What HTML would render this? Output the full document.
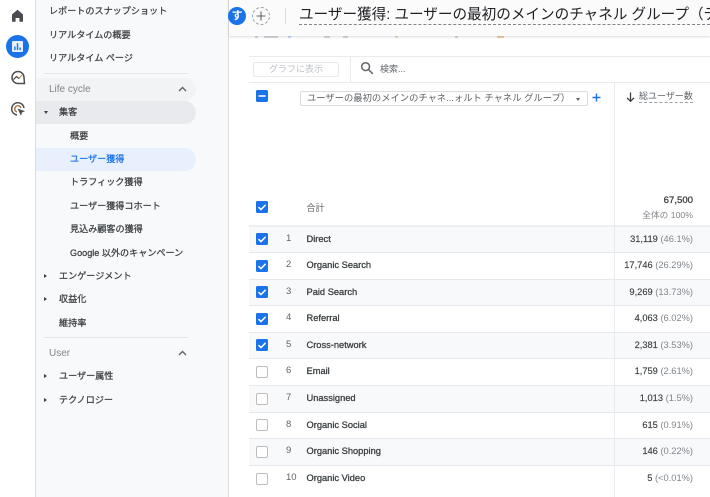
<!DOCTYPE html>
<html lang="ja"><head><meta charset="utf-8">
<style>
html,body{margin:0;padding:0}
body{width:710px;height:497px;position:relative;overflow:hidden;background:#fff;font-family:"Liberation Sans","Noto Sans CJK JP",sans-serif;color:#3c4043;font-size:10px}
.a{position:absolute;white-space:nowrap}
.nav{position:absolute;white-space:nowrap;font-size:9.1px;line-height:14px;color:#3c4043;font-weight:normal;-webkit-text-stroke:.25px #3c4043}
.sec{font-size:10px;color:#80868b;-webkit-text-stroke:0}
.tri{position:absolute;left:44px;width:0;height:0;border-top:2.5px solid transparent;border-bottom:2.5px solid transparent;border-left:3.5px solid #3c4043}
.row{position:absolute;left:249px;width:461px;box-sizing:border-box;border-bottom:1px solid #e6e8ee}
.g{background:#f8f9fb}
.cb{position:absolute;left:256px;width:12px;height:12px;box-sizing:border-box;border-radius:1.5px;background:#1a73e8}
.cb svg{position:absolute;left:0;top:0}
.ub{position:absolute;left:256px;width:12px;height:12px;box-sizing:border-box;border-radius:2px;border:1.5px solid #bdbdbd;background:#fff}
.n{position:absolute;left:286px;font-size:9.5px;color:#5f6368;line-height:14px}
.l{position:absolute;left:306.5px;font-size:9.3px;font-weight:normal;-webkit-text-stroke:.3px #3c4043;color:#3c4043;line-height:14px;white-space:nowrap}
.v{position:absolute;right:17px;font-size:9.3px;line-height:14px;color:#3c4043;white-space:nowrap;-webkit-text-stroke:.15px #3c4043}
.v span{color:#80868b;-webkit-text-stroke:0}
.bit{position:absolute;top:36px;height:2px;background:#d5d7da}
</style></head><body>

<!-- side rail -->
<div class="a" style="left:0;top:0;width:35px;height:497px;background:#fff;border-right:1px solid #dadce0"></div>
<svg class="a" style="left:11px;top:9px" width="13" height="13" viewBox="0 0 13 13"><path d="M6.5 .8 1 5.4V12.8h3.6V9h3.8v3.8H12V5.4z" fill="#4a4d52"/></svg>
<div class="a" style="left:6px;top:35px;width:23px;height:23px;border-radius:50%;background:#1a73e8"></div>
<svg class="a" style="left:12px;top:41px" width="11" height="11" viewBox="0 0 11 11"><rect width="11" height="11" rx="1" fill="#e8f0fe"/><rect x="2.2" y="5.5" width="1.4" height="3.6" fill="#1a73e8"/><rect x="4.8" y="2.2" width="1.4" height="6.9" fill="#1a73e8"/><rect x="7.4" y="6.5" width="1.4" height="2.6" fill="#1a73e8"/></svg>
<svg class="a" style="left:10px;top:70px" width="16" height="16" viewBox="0 0 16 16" fill="none" stroke="#4a4d52" stroke-width="1.5"><path d="M14.5 13.5H8A6 6 0 1 1 14 7.5z"/><path d="M3.5 9.5 6.5 6.5 9 8.5 12 5" stroke="#c78a4a" stroke-width="1.1"/><path d="M3.5 9.5 6.5 6.5 9 8.5" stroke-width="1.2"/></svg>
<svg class="a" style="left:10px;top:101px" width="16" height="16" viewBox="0 0 16 16" fill="none" stroke="#4a4d52" stroke-width="1.4"><path d="M7 14A6.2 6.2 0 1 1 14 7"/><path d="M7 11A3.2 3.2 0 1 1 11 7" stroke="#a5784f"/><path d="M7.5 7.5 15 10.3 12 11.5 11 14.8z" fill="#4a4d52" stroke="none"/></svg>

<!-- sidebar -->
<div class="a" style="left:36px;top:0;width:192px;height:497px;background:#f8f9fb;border-right:1px solid #dadce0"></div>
<div class="nav" style="left:49px;top:4px">レポートのスナップショット</div>
<div class="nav" style="left:49px;top:28px">リアルタイムの概要</div>
<div class="nav" style="left:49px;top:51px">リアルタイム ページ</div>
<div class="a" style="left:44px;top:73px;width:144px;height:1px;background:#e3e5e8"></div>
<div class="a" style="left:36px;top:78px;width:160px;height:23px;background:#f1f3f4;border-radius:0 12px 12px 0"></div>
<div class="nav sec" style="left:49px;top:83px">Life cycle</div>
<svg class="a" style="left:178px;top:85px" width="9" height="8" viewBox="0 0 9 8" fill="none" stroke="#5f6368" stroke-width="1.4"><path d="M1 6 4.5 2.5 8 6"/></svg>
<div class="a" style="left:36px;top:101px;width:160px;height:23px;background:#e8eaed;border-radius:0 12px 12px 0"></div>
<div class="a" style="left:43.5px;top:111px;width:0;height:0;border-left:2.5px solid transparent;border-right:2.5px solid transparent;border-top:3.5px solid #3c4043"></div>
<div class="nav" style="left:59px;top:105px">集客</div>
<div class="nav" style="left:70px;top:129px">概要</div>
<div class="a" style="left:36px;top:148px;width:160px;height:23px;background:#e8f0fe;border-radius:0 12px 12px 0"></div>
<div class="nav" style="left:70px;top:152px;color:#1a73e8;-webkit-text-stroke:.25px #1a73e8">ユーザー獲得</div>
<div class="nav" style="left:70px;top:175px">トラフィック獲得</div>
<div class="nav" style="left:70px;top:199px">ユーザー獲得コホート</div>
<div class="nav" style="left:70px;top:222px">見込み顧客の獲得</div>
<div class="nav" style="left:70px;top:246px">Google 以外のキャンペーン</div>
<div class="tri" style="top:273.5px"></div>
<div class="nav" style="left:59px;top:269px">エンゲージメント</div>
<div class="tri" style="top:296.5px"></div>
<div class="nav" style="left:59px;top:292px">収益化</div>
<div class="nav" style="left:59px;top:316px">維持率</div>
<div class="a" style="left:44px;top:337px;width:144px;height:1px;background:#e3e5e8"></div>
<div class="nav sec" style="left:49px;top:347px">User</div>
<svg class="a" style="left:178px;top:349px" width="9" height="8" viewBox="0 0 9 8" fill="none" stroke="#5f6368" stroke-width="1.4"><path d="M1 6 4.5 2.5 8 6"/></svg>
<div class="tri" style="top:374px"></div>
<div class="nav" style="left:59px;top:369px">ユーザー属性</div>
<div class="tri" style="top:397.5px"></div>
<div class="nav" style="left:59px;top:393px">テクノロジー</div>

<!-- main background strip -->
<div class="a" style="left:229px;top:36px;width:481px;height:461px;background:#fff"></div>

<!-- remnants of chips under header -->
<div class="bit" style="left:255px;width:3px;background:#c4d7f5"></div>
<div class="bit" style="left:264px;width:14px"></div>
<div class="bit" style="left:288px;width:3px;background:#c4d7f5"></div>
<div class="bit" style="left:324px;width:6px"></div>
<div class="bit" style="left:343px;width:5px"></div>
<div class="bit" style="left:395px;width:3px;background:#f5dcc0"></div>
<div class="bit" style="left:455px;width:3px;background:#c4d7f5"></div>
<div class="bit" style="left:497px;width:7px;background:#eecb9f"></div>

<!-- header -->
<div class="a" style="left:229px;top:0;width:481px;height:36px;background:#fbfbfc;box-shadow:0 1px 2px rgba(60,64,67,.18)"></div>
<div class="a" style="left:228px;top:7px;width:18px;height:18px;border-radius:50%;background:#1a73e8;color:#fff;font-size:11px;font-weight:bold;display:flex;align-items:center;justify-content:center;line-height:1">す</div>
<div class="a" style="left:252px;top:7px;width:16px;height:16px;border-radius:50%;border:1px dashed #9aa0a6"></div>
<svg class="a" style="left:255px;top:10px" width="12" height="12" viewBox="0 0 12 12" stroke="#5f6368" stroke-width="1.1"><path d="M6 1.5v9M1.5 6h9"/></svg>
<div class="a" style="left:285px;top:8px;width:1px;height:16px;background:#dadce0"></div>
<div class="a" style="left:299px;top:6px;font-size:14.6px;line-height:18px;color:#202124;width:411px;overflow:hidden;border-bottom:1px dashed #80868b">ユーザー獲得: ユーザーの最初のメインのチャネル グループ（デ</div>

<!-- toolbar -->
<div class="a" style="left:249px;top:56px;width:461px;height:1px;background:#e8eaed"></div>
<div class="a" style="left:249px;top:82px;width:461px;height:1px;background:#e8eaed"></div>
<div class="a" style="left:350px;top:56px;width:1px;height:26px;background:#e8eaed"></div>
<div class="a" style="left:253px;top:62px;width:86px;height:15px;box-sizing:border-box;border:1px solid #e8eaed;border-radius:2px;color:#bdc1c6;font-size:9px;line-height:13px;text-align:center">グラフに表示</div>
<svg class="a" style="left:360px;top:61px" width="14" height="14" viewBox="0 0 14 14" fill="none" stroke="#5f6368" stroke-width="1.5"><circle cx="5.6" cy="5.6" r="3.9"/><path d="M8.5 8.5 12.8 12.8"/></svg>
<div class="a" style="left:380px;top:62px;font-size:9px;line-height:14px;color:#5f6368">検索...</div>

<!-- column header -->
<div class="a" style="left:614px;top:83px;width:1px;height:414px;background:#e8eaed"></div>
<div class="cb" style="top:90px"><svg width="12" height="12"><path d="M2.5 6h7" stroke="#fff" stroke-width="1.6"/></svg></div>
<div class="a" style="left:300px;top:91px;width:288px;height:15px;box-sizing:border-box;border:1px solid #dadce0;border-radius:2px;font-size:9.3px;line-height:13px;color:#5f6368;padding-left:6px">ユーザーの最初のメインのチャネ...ォルト チャネル グループ）</div>
<div class="a" style="left:576px;top:98px;width:0;height:0;border-left:2.5px solid transparent;border-right:2.5px solid transparent;border-top:3px solid #5f6368"></div>
<svg class="a" style="left:591px;top:92px" width="11" height="11" viewBox="0 0 11 11" stroke="#1a73e8" stroke-width="1.4"><path d="M5.5 1.5v8M1.5 5.5h8"/></svg>
<svg class="a" style="left:625px;top:91px" width="11" height="12" viewBox="0 0 11 12" fill="none" stroke="#3c4043" stroke-width="1.3"><path d="M5.5 1.5v8.5M2 6.8 5.5 10.3 9 6.8"/></svg>
<div class="a" style="left:639px;top:90px;font-size:9px;line-height:12px;color:#5f6368;border-bottom:1px dashed #9aa0a6">総ユーザー数</div>

<!-- total -->
<div class="cb" style="top:201px"><svg width="12" height="12" fill="none"><path d="M2.5 6.2 5 8.6 9.6 3.8" stroke="#fff" stroke-width="1.5"/></svg></div>
<div class="a" style="left:306.5px;top:201px;font-size:9px;line-height:14px;color:#5f6368">合計</div>
<div class="a" style="right:17px;top:194px;font-size:9.6px;line-height:14px;color:#3c4043;-webkit-text-stroke:.3px #3c4043">67,500</div>
<div class="a" style="right:17px;top:208px;font-size:8.7px;line-height:14px;color:#80868b">全体の 100%</div>

<!-- rows -->
<div class="row" style="top:225px;height:2px;background:#eceef2;border:0"></div>
<div class="row g" style="top:227px;height:26px"></div>
<div class="row" style="top:253px;height:27px"></div>
<div class="row g" style="top:280px;height:26px"></div>
<div class="row" style="top:306px;height:27px"></div>
<div class="row g" style="top:333px;height:26px"></div>
<div class="row" style="top:359px;height:27px"></div>
<div class="row g" style="top:386px;height:27px"></div>
<div class="row" style="top:413px;height:26px"></div>
<div class="row g" style="top:439px;height:27px"></div>
<div class="row" style="top:466px;height:31px;border:0"></div>
<div class="a" style="left:614px;top:225px;width:1px;height:272px;background:#e8eaed"></div>

<div class="cb" style="top:233px"><svg width="12" height="12" fill="none"><path d="M2.5 6.2 5 8.6 9.6 3.8" stroke="#fff" stroke-width="1.5"/></svg></div>
<div class="n" style="top:232px">1</div><div class="l" style="top:232px">Direct</div><div class="v" style="top:232px">31,119 <span>(46.1%)</span></div>

<div class="cb" style="top:260px"><svg width="12" height="12" fill="none"><path d="M2.5 6.2 5 8.6 9.6 3.8" stroke="#fff" stroke-width="1.5"/></svg></div>
<div class="n" style="top:258px">2</div><div class="l" style="top:258px">Organic Search</div><div class="v" style="top:258px">17,746 <span>(26.29%)</span></div>

<div class="cb" style="top:286px"><svg width="12" height="12" fill="none"><path d="M2.5 6.2 5 8.6 9.6 3.8" stroke="#fff" stroke-width="1.5"/></svg></div>
<div class="n" style="top:285px">3</div><div class="l" style="top:285px">Paid Search</div><div class="v" style="top:285px">9,269 <span>(13.73%)</span></div>

<div class="cb" style="top:313px"><svg width="12" height="12" fill="none"><path d="M2.5 6.2 5 8.6 9.6 3.8" stroke="#fff" stroke-width="1.5"/></svg></div>
<div class="n" style="top:311px">4</div><div class="l" style="top:311px">Referral</div><div class="v" style="top:311px">4,063 <span>(6.02%)</span></div>

<div class="cb" style="top:339px"><svg width="12" height="12" fill="none"><path d="M2.5 6.2 5 8.6 9.6 3.8" stroke="#fff" stroke-width="1.5"/></svg></div>
<div class="n" style="top:338px">5</div><div class="l" style="top:338px">Cross-network</div><div class="v" style="top:338px">2,381 <span>(3.53%)</span></div>

<div class="ub" style="top:366px"></div>
<div class="n" style="top:364px">6</div><div class="l" style="top:364px">Email</div><div class="v" style="top:364px">1,759 <span>(2.61%)</span></div>

<div class="ub" style="top:393px"></div>
<div class="n" style="top:391px">7</div><div class="l" style="top:391px">Unassigned</div><div class="v" style="top:391px">1,013 <span>(1.5%)</span></div>

<div class="ub" style="top:419px"></div>
<div class="n" style="top:418px">8</div><div class="l" style="top:418px">Organic Social</div><div class="v" style="top:418px">615 <span>(0.91%)</span></div>

<div class="ub" style="top:446px"></div>
<div class="n" style="top:444px">9</div><div class="l" style="top:444px">Organic Shopping</div><div class="v" style="top:444px">146 <span>(0.22%)</span></div>

<div class="ub" style="top:473px"></div>
<div class="n" style="top:471px">10</div><div class="l" style="top:471px">Organic Video</div><div class="v" style="top:471px">5 <span>(&lt;0.01%)</span></div>

</body></html>
